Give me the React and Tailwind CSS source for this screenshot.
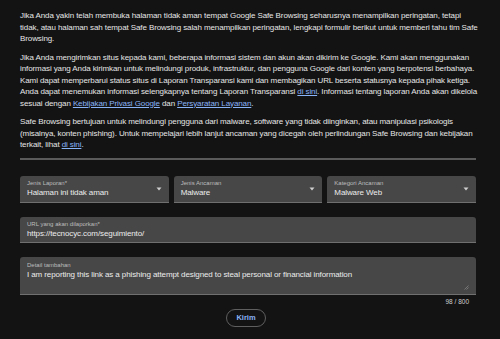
const font = { fontFamily: '"Liberation Sans", Arial, sans-serif' };

function Caret() {
  return (
    <svg width="6" height="4" viewBox="0 0 6 4" className="shrink-0">
      <path d="M0.5 0.5 L5.5 0.5 L3 3.5 Z" fill="#cfcfcf" />
    </svg>
  );
}

function SelectField({ label, value }) {
  return (
    <div className="flex-1 h-[27px] bg-[#474747] rounded-t-[3px] border-b border-[#707070] pl-[7px] pr-[7px] flex items-center">
      <div className="flex-1 min-w-0">
        <div className="text-[6px] leading-[8px] text-[#bdbdbd]">{label}</div>
        <div className="text-[8px] leading-[11px] tracking-[-0.1px] text-[#ececec]">{value}</div>
      </div>
      <Caret />
    </div>
  );
}

function A({ children }) {
  return <a className="text-[#8ab4f8] underline">{children}</a>;
}

export default function App() {
  return (
    <div className="w-[500px] h-[339px] bg-[#131313] text-[#e6e6e6] overflow-hidden" style={font}>
      <div className="pl-5 pr-6 pt-[10px]">
        <div className="text-[8px] leading-[11.5px] tracking-[-0.1px] flex flex-col gap-[7px] whitespace-nowrap">
          <p>
            Jika Anda yakin telah membuka halaman tidak aman tempat Google Safe Browsing seharusnya menampilkan peringatan, tetapi<br />
            tidak, atau halaman sah tempat Safe Browsing salah menampilkan peringatan, lengkapi formulir berikut untuk memberi tahu tim Safe<br />
            Browsing.
          </p>
          <p>
            Jika Anda mengirimkan situs kepada kami, beberapa informasi sistem dan akun akan dikirim ke Google. Kami akan menggunakan<br />
            informasi yang Anda kirimkan untuk melindungi produk, infrastruktur, dan pengguna Google dari konten yang berpotensi berbahaya.<br />
            Kami dapat memperbarui status situs di Laporan Transparansi kami dan membagikan URL beserta statusnya kepada pihak ketiga.<br />
            Anda dapat menemukan informasi selengkapnya tentang Laporan Transparansi <A>di sini</A>. Informasi tentang laporan Anda akan dikelola<br />
            sesuai dengan <A>Kebijakan Privasi Google</A> dan <A>Persyaratan Layanan</A>.
          </p>
          <p>
            Safe Browsing bertujuan untuk melindungi pengguna dari malware, software yang tidak diinginkan, atau manipulasi psikologis<br />
            (misalnya, konten phishing). Untuk mempelajari lebih lanjut ancaman yang dicegah oleh perlindungan Safe Browsing dan kebijakan<br />
            terkait, lihat <A>di sini</A>.
          </p>
        </div>
        <div className="mt-[7px] h-[2px] bg-[#5a5a5a]" />

        <div className="mt-[16px] flex gap-[5px]">
          <SelectField label="Jenis Laporan*" value="Halaman ini tidak aman" />
          <SelectField label="Jenis Ancaman" value="Malware" />
          <SelectField label="Kategori Ancaman" value="Malware Web" />
        </div>

        <div className="mt-[14px] h-[26px] bg-[#474747] rounded-t-[3px] border-b border-[#707070] px-[7px] flex flex-col justify-center">
          <div className="text-[6px] leading-[8px] text-[#bdbdbd]">URL yang akan dilaporkan*</div>
          <div className="text-[8px] leading-[11px] tracking-[-0.1px] text-[#ececec]">https://tecnocyc.com/seguimiento/</div>
        </div>

        <div className="mt-[14px] h-[38px] bg-[#474747] rounded-t-[3px] border-b border-[#707070] px-[7px] pt-[4px] relative">
          <div className="text-[6px] leading-[8px] text-[#bdbdbd]">Detail tambahan</div>
          <div className="text-[8px] leading-[11px] tracking-[-0.1px] text-[#ececec]">
            I am reporting this link as a phishing attempt designed to steal personal or financial information
          </div>
          <svg width="5" height="5" viewBox="0 0 5 5" className="absolute right-[7px] bottom-[4px]">
            <path d="M0.5 4.5 L4.5 0.5 M2.5 4.5 L4.5 2.5" stroke="#8a8a8a" strokeWidth="0.7" />
          </svg>
        </div>
        <div className="flex justify-end pr-[7px] mt-[3px]">
          <span className="text-[6.5px] leading-[8px] text-[#d0d0d0]">98 / 800</span>
        </div>

        <div className="flex justify-center mt-[3px] pr-[4px]">
          <button className="w-[40px] h-[18px] rounded-full border border-[#5f5f5f] text-[7.5px] font-bold text-[#8ab4f8] flex items-center justify-center">
            Kirim
          </button>
        </div>
      </div>
    </div>
  );
}
